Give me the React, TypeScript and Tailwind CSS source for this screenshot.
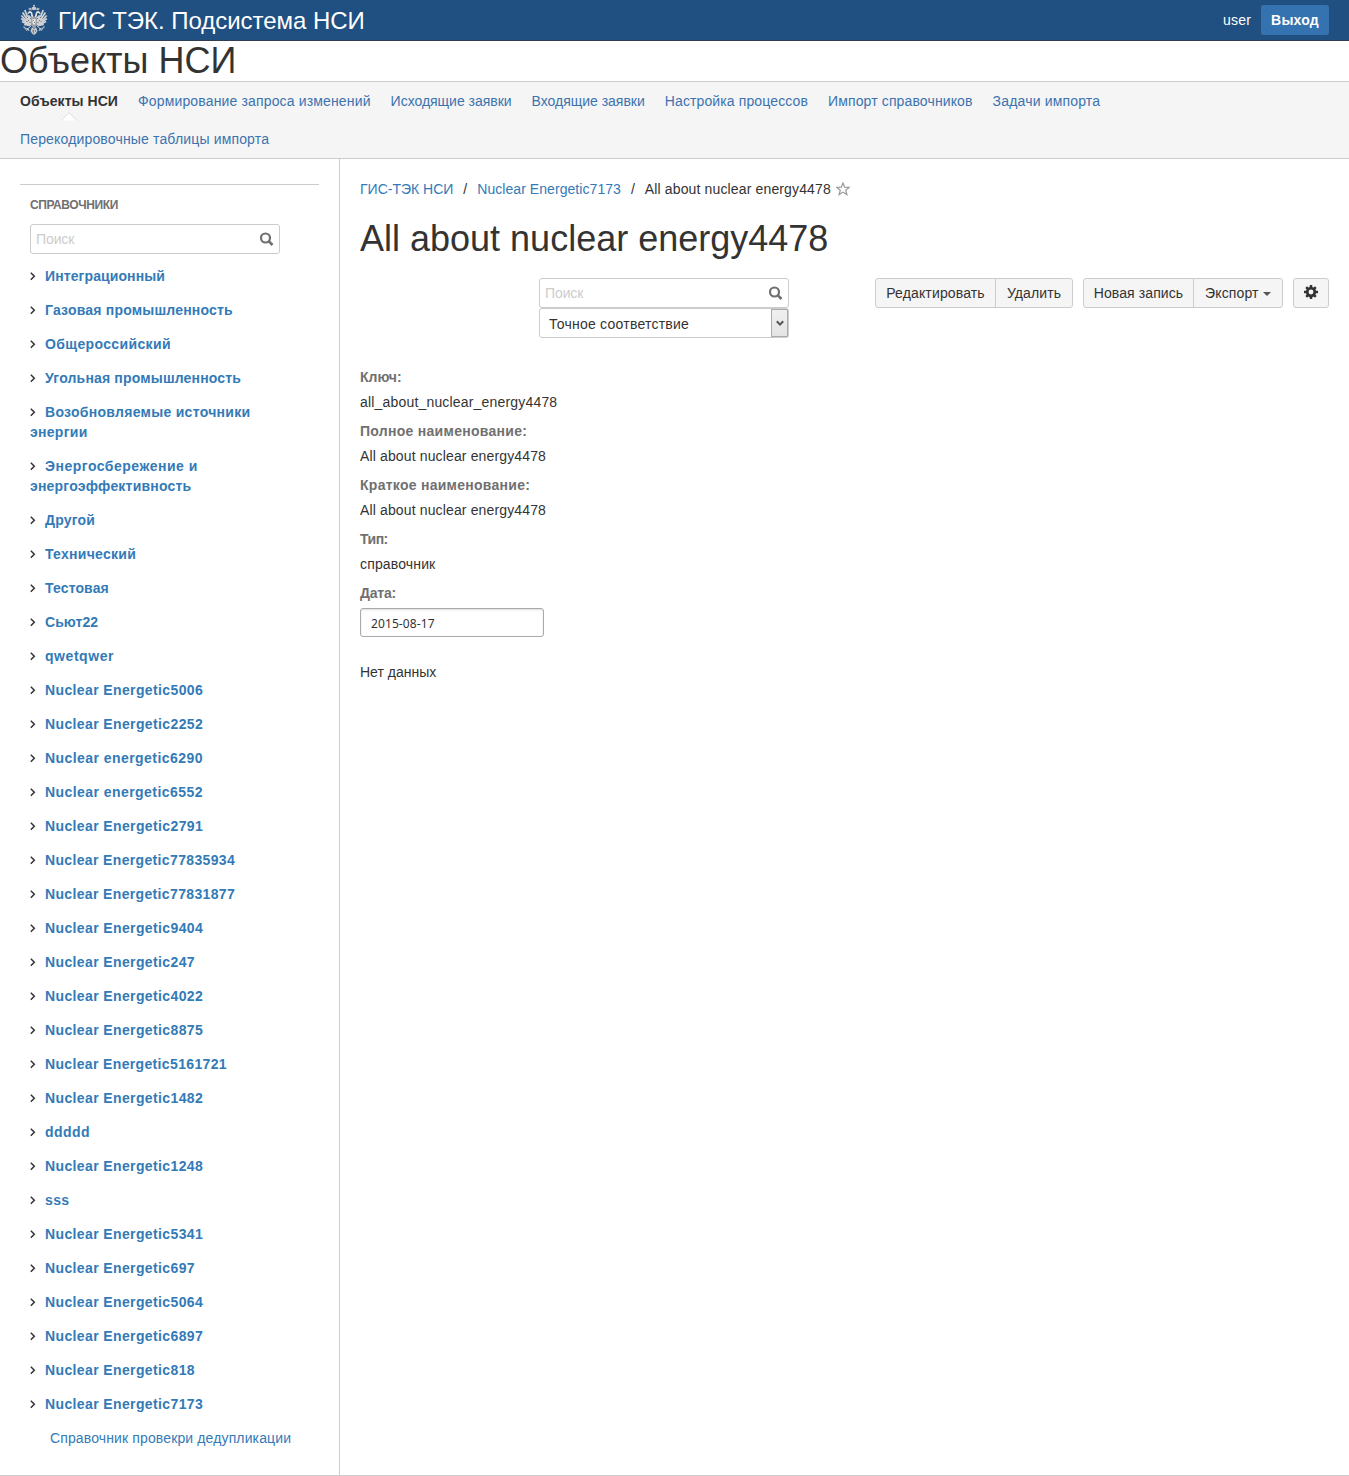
import React from "react";

const navItems = [
  ["Формирование запроса изменений", "tracking-[0.15px]"],
  ["Исходящие заявки", "tracking-[-0.02px]"],
  ["Входящие заявки", "tracking-[-0.02px]"],
  ["Настройка процессов", "tracking-[0.12px]"],
  ["Импорт справочников", "tracking-[0.13px]"],
  ["Задачи импорта", "tracking-[0.17px]"],
  ["Перекодировочные таблицы импорта", "tracking-[0.16px]"],
];

const groups = [
  ["Интеграционный", "tracking-[0.1px]"],
  ["Газовая промышленность", "tracking-[0.2px]"],
  ["Общероссийский", "tracking-[0.36px]"],
  ["Угольная промышленность", "tracking-[0.17px]"],
  ["Возобновляемые источники энергии", "tracking-[0.29px]"],
  ["Энергосбережение и", "tracking-[0.5px]", "энергоэффективность"],
  ["Другой", "tracking-[0.17px]"],
  ["Технический", "tracking-[0.27px]"],
  ["Тестовая", "tracking-[0.13px]"],
  ["Сьют22", "tracking-[0.05px]"],
  ["qwetqwer", "tracking-[0.55px]"],
  ["Nuclear Energetic5006"],
  ["Nuclear Energetic2252"],
  ["Nuclear energetic6290", "tracking-[0.44px]"],
  ["Nuclear energetic6552", "tracking-[0.44px]"],
  ["Nuclear Energetic2791"],
  ["Nuclear Energetic77835934", "tracking-[0.35px]"],
  ["Nuclear Energetic77831877", "tracking-[0.35px]"],
  ["Nuclear Energetic9404"],
  ["Nuclear Energetic247"],
  ["Nuclear Energetic4022"],
  ["Nuclear Energetic8875"],
  ["Nuclear Energetic5161721", "tracking-[0.35px]"],
  ["Nuclear Energetic1482"],
  ["ddddd", "tracking-[0.45px]"],
  ["Nuclear Energetic1248"],
  ["sss"],
  ["Nuclear Energetic5341"],
  ["Nuclear Energetic697"],
  ["Nuclear Energetic5064"],
  ["Nuclear Energetic6897"],
  ["Nuclear Energetic818"],
  ["Nuclear Energetic7173"],
];

const fields = [
  ["Ключ:", "", "all_about_nuclear_energy4478", "tracking-[0.18px]"],
  ["Полное наименование:", "tracking-[0.28px]", "All about nuclear energy4478", "tracking-[0.14px]"],
  ["Краткое наименование:", "tracking-[0.27px]", "All about nuclear energy4478", "tracking-[0.14px]"],
  ["Тип:", "tracking-[-0.5px]", "справочник", "tracking-[0.15px]"],
];

function Wing() {
  return (
    <g>
      <g fill="none" stroke="#d3d4d6" strokeWidth="1.7">
        <path d="M9.500 18L4.800 6" />
        <path d="M9 18L2.600 8.500" />
        <path d="M8.600 19L1.300 11.500" />
        <path d="M8.600 20L1.200 14.500" />
        <path d="M9 21L2 17.500" />
        <path d="M10 21.500L4.200 20.500" />
      </g>
      <path d="M7 12l2-1 2 2 1 8-3 1-3-4z" fill="#cfd1d3" />
      <path d="M12.500 14l-1.500-2V9.500L9.500 9 7.800 10.500 7.400 9 9.600 6.800 12 8l1.500 5z" fill="#dcdcdc" />
      <path d="M8.600 5.500l.2-1.700 1.200.8.8-1 .9 1.100-.4 1.700z" fill="#bfc3c7" />
      <path d="M11 22l-3 2.500-2.500.5M8 24.500L6.500 27M8 24.500L9 27" fill="none" stroke="#c4c7ca" strokeWidth="1" />
      <path d="M3.500 22.500l3 3" stroke="#aeb6be" strokeWidth="1.200" />
      <path d="M7.500 13v1M8.500 16v1M10.500 14v1M10 18v1M7 17v1" stroke="#68727e" strokeWidth="1" />
    </g>
  );
}

function Emblem() {
  return (
    <svg width="28" height="32" viewBox="0 0 28 32" className="block shrink-0">
      <Wing />
      <g transform="matrix(-1 0 0 1 28 0)">
        <Wing />
      </g>
      <path d="M14 .8v2M13 1.700h2" stroke="#cfd1d3" strokeWidth=".9" />
      <path d="M11.800 3.500L14 2.500l2.200 1-.5 2.500h-3.400z" fill="#c8cbce" />
      <path d="M11 13h6v8l-3 3.500-3-3.500z" fill="#9fa4aa" />
      <path d="M12.500 15h3v4L14 21l-1.500-2z" fill="#e6e6e6" />
      <path d="M13 16.500h1M14 18.500h1" stroke="#7a818a" />
      <path d="M12 23l-1.500 4 1.500 2.500 2 1.500 2-1.500 1.500-2.500L16 23l-2 2z" fill="#c9ccce" />
      <path d="M13.500 25.500v4M15.500 26v2M12 27h1" stroke="#68727e" strokeWidth=".8" />
    </svg>
  );
}

function Magnifier() {
  return (
    <svg width="14" height="14" viewBox="0 0 14 14" className="block" fill="none" stroke="#707070">
      <circle cx="5.500" cy="6" r="4.500" strokeWidth="2.200" />
      <path d="M8.900 9.400l3.600 3.600" strokeWidth="2.700" />
    </svg>
  );
}

function SearchBox() {
  return (
    <div className="flex h-[30px] w-[250px] items-center justify-between rounded-[3px] border border-[#ccc] bg-white pr-[5px] pl-[5px]">
      <span className="tracking-[-0.1px] text-[#ccc]">Поиск</span>
      <Magnifier />
    </div>
  );
}

function Gear() {
  return (
    <svg width="14" height="14" viewBox="0 0 14 14" className="block" fill="none" stroke="#333">
      <circle cx="7" cy="7" r="3.800" strokeWidth="2.700" />
      <path
        d="M7 0v2.600M7 11.400V14M0 7h2.600M11.400 7H14M2.200 2.200l1.700 1.700M10.100 10.100l1.700 1.700M2.200 11.800l1.700-1.700M10.100 3.900l1.700-1.700"
        strokeWidth="2.500"
      />
    </svg>
  );
}

export default function App() {
  return (
    <div className="flex h-[1476px] w-[1349px] flex-col overflow-hidden border-b border-[#ccc] bg-white font-['Liberation_Sans',Arial,sans-serif] text-[14px] leading-5 text-[#333]">
      <header className="flex h-[41px] shrink-0 items-center border-b border-[#2e3d54] bg-[#205081] px-5 text-white">
        <Emblem />
        <span className="ml-[10px] pt-px text-[24px] leading-10 tracking-[-0.03px]">ГИС ТЭК. Подсистема НСИ</span>
        <span className="ml-auto tracking-[0.2px]">user</span>
        <button className="ml-[10px] h-[30px] w-[68px] rounded-[3px] bg-[#3572b0] font-bold tracking-[0.2px]">
          Выход
        </button>
      </header>
      <h1 className="h-10 shrink-0 text-[36px] leading-10">Объекты НСИ</h1>
      <nav className="flex h-[78px] shrink-0 flex-wrap content-start border-y border-[#ccc] bg-[#f5f5f5] px-[10px] text-[#3b73af]">
        <a className="relative px-[10px] py-[9px] font-bold tracking-[0.06px] text-[#333]">
          Объекты НСИ
          <svg width="16" height="9" viewBox="0 0 16 9" className="absolute top-[30px] left-[51px]">
            <path d="M0 8.500L8 .7l8 7.800" fill="#fff" stroke="#ddd" />
          </svg>
        </a>
        {navItems.map(([item, tracking]) => (
          <a key={item} className={`px-[10px] py-[9px] ${tracking}`}>
            {item}
          </a>
        ))}
      </nav>
      <div className="flex min-h-0 flex-1">
        <aside className="w-[340px] shrink-0 border-r border-[#ccc] px-5 pt-[25px]">
          <div className="border-t border-[#ccc] px-[10px] pt-[10px]">
            <h2 className="text-[12px] leading-5 font-bold tracking-[-0.4px] text-[#707070]">СПРАВОЧНИКИ</h2>
            <div className="mt-[9px] mb-[5px]">
              <SearchBox />
            </div>
            <ul>
              {groups.map(([name, tracking = "tracking-[0.38px]", rest]) => (
                <li key={name} className={`w-[250px] py-[7px] font-bold text-[#337ab7] ${tracking}`}>
                  <svg width="6" height="9" viewBox="0 0 6 9" className="mr-[9px] inline-block align-[0px]">
                    <path d="M.8.800L4.300 4.300.8 7.800" fill="none" stroke="#333" strokeWidth="1.500" />
                  </svg>
                  {name}
                  {rest && <span className="block tracking-[0.2px]">{rest}</span>}
                </li>
              ))}
              <li className="py-[7px] pl-5 tracking-[0.13px] text-[#337ab7]">Справочник провекри дедупликации</li>
            </ul>
          </div>
        </aside>
        <main className="flex-1 px-5 pt-5">
          <div className="flex h-5 items-center">
            <a className="text-[#337ab7]">ГИС-ТЭК НСИ</a>
            <span className="mx-[10px]">/</span>
            <a className="tracking-[0.06px] text-[#337ab7]">Nuclear Energetic7173</a>
            <span className="mx-[10px]">/</span>
            <span className="tracking-[0.14px]">All about nuclear energy4478</span>
            <svg width="14" height="14" viewBox="0 0 14 14" className="ml-[5px]">
              <path
                d="M7 1l1.700 4.200 4.500.2-3.500 2.800 1.200 4.400L7 10.100l-3.900 2.500 1.200-4.400L.8 5.400l4.500-.2z"
                fill="none"
                stroke="#999"
                strokeWidth="1.200"
              />
            </svg>
          </div>
          <h1 className="mt-5 text-[36px] leading-10">All about nuclear energy4478</h1>
          <div className="mt-[19px] flex items-start">
            <div className="ml-[179px] w-[250px]">
              <SearchBox />
              <div className="flex h-[30px] items-center justify-between rounded-[3px] border border-[#ccc] pl-[9px]">
                <span className="pt-[2px] tracking-[0.24px]">Точное соответствие</span>
                <span className="flex h-full w-[17px] items-center justify-center border border-[#acacac] bg-linear-to-b from-[#f0f0f0] to-[#e4e4e4]">
                  <svg width="8" height="7" viewBox="0 0 8 7" className="shrink-0">
                    <path d="M.8 1.200L4 4.600l3.200-3.400" fill="none" stroke="#555" strokeWidth="2" />
                  </svg>
                </span>
              </div>
            </div>
            <div className="ml-auto flex h-[30px] gap-[10px]">
              <div className="flex divide-x divide-[#ccc] rounded-[3px] border border-[#ccc] bg-[#f5f5f5]">
                <button className="w-[120px] tracking-[0.15px]">Редактировать</button>
                <button className="w-[76px] tracking-[0.1px]">Удалить</button>
              </div>
              <div className="flex divide-x divide-[#ccc] rounded-[3px] border border-[#ccc] bg-[#f5f5f5]">
                <button className="w-[110px] tracking-[0.1px]">Новая запись</button>
                <button className="flex w-[88px] items-center pl-[11px] tracking-[0.15px]">
                  Экспорт
                  <span className="mt-[2px] ml-1 border-x-4 border-t-4 border-x-transparent border-t-[#555]" />
                </button>
              </div>
              <button className="flex w-9 justify-center rounded-[3px] border border-[#ccc] bg-[#f5f5f5] pt-[6px]">
                <Gear />
              </button>
            </div>
          </div>
          <dl className="mt-[29px]">
            {fields.map(([label, labelTracking, value, valueTracking]) => (
              <div key={label} className="h-[54px]">
                <dt className={`font-bold text-[#707070] ${labelTracking}`}>{label}</dt>
                <dd className={`pt-[5px] ${valueTracking}`}>{value}</dd>
              </div>
            ))}
            <dt className="font-bold tracking-[-0.2px] text-[#707070]">Дата:</dt>
            <dd className="mt-[5px] flex h-[29px] w-[184px] items-center rounded-[3px] border border-[#aaa] px-[10px] pt-[2px] font-['Noto_Sans',sans-serif] text-[12px] tracking-[0.1px] shadow-[inset_0_1px_2px_#ddd]">
              2015-08-17
            </dd>
          </dl>
          <p className="mt-[25px]">Нет данных</p>
        </main>
      </div>
    </div>
  );
}
